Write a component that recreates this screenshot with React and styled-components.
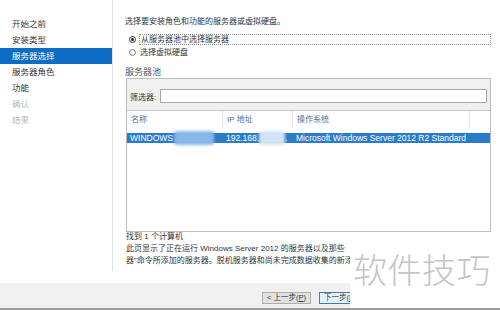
import React from "react";
import styled, { createGlobalStyle } from "styled-components";

const FONT = `"Liberation Sans", "Noto Sans CJK SC", sans-serif`;

const GlobalStyle = createGlobalStyle`
  html, body {
    margin: 0;
    padding: 0;
    background: #ffffff;
  }
  body {
    font-family: ${FONT};
    color: #1e1e1e;
  }
`;

const NAV_ITEMS = [
  { label: "开始之前" },
  { label: "安装类型" },
  { label: "服务器选择", active: true },
  { label: "服务器角色" },
  { label: "功能" },
  { label: "确认", disabled: true },
  { label: "结果", disabled: true },
];

const App = () => {
  return (
    <>
      <GlobalStyle />
      <Window>
        <Main>
          <Nav>
            {NAV_ITEMS.map((item) => (
              <NavItem
                key={item.label}
                $active={item.active}
                $disabled={item.disabled}
              >
                {item.label}
              </NavItem>
            ))}
          </Nav>
          <Content>
            <Intro>选择要安装角色和功能的服务器或虚拟硬盘。</Intro>
            <RadioGroup>
              <RadioRow>
                <Radio $checked />
                <RadioLabel $focused>从服务器池中选择服务器</RadioLabel>
              </RadioRow>
              <RadioRow>
                <Radio />
                <RadioLabel>选择虚拟硬盘</RadioLabel>
              </RadioRow>
            </RadioGroup>
            <PoolTitle>服务器池</PoolTitle>
            <PoolBox>
              <FilterBar>
                <FilterLabel>筛选器:</FilterLabel>
                <FilterInput />
              </FilterBar>
              <TableHead>
                <HeadCell>名称</HeadCell>
                <HeadCell>IP 地址</HeadCell>
                <HeadCell>操作系统</HeadCell>
                <HeadCell $last />
              </TableHead>
              <TableBody>
                <Row $selected>
                  <Cell>
                    WINDOWS
                    <Blur $left={47} $width={40} />
                  </Cell>
                  <Cell>
                    192.168.1
                    <Blur $left={36} $width={26} $light />
                    <Dot>.</Dot>
                  </Cell>
                  <Cell>Microsoft Windows Server 2012 R2 Standard</Cell>
                </Row>
              </TableBody>
            </PoolBox>
            <Found>找到 1 个计算机</Found>
            <Note>
              <NoteLine>此页显示了正在运行 Windows Server 2012 的服务器以及那些</NoteLine>
              <NoteLine>器”命令所添加的服务器。脱机服务器和尚未完成数据收集的新添</NoteLine>
            </Note>
          </Content>
        </Main>
        <Footer>
          <Button>
            &lt; 上一步(<u>P</u>)
          </Button>
          <Button $primary $cut>
            下一步(<u>N</u>
          </Button>
        </Footer>
        <Watermark>软件技巧</Watermark>
      </Window>
    </>
  );
};

const Window = styled.div`
  position: relative;
  width: 500px;
  height: 310px;
  overflow: hidden;
  display: flex;
  flex-direction: column;
  background: #ffffff;
`;

const Main = styled.div`
  display: flex;
  height: 283px;
`;

const Nav = styled.div`
  width: 112px;
  height: 255px;
  padding-top: 16px;
  border-right: 1px solid #e2e2e2;
  display: flex;
  flex-direction: column;
`;

const NavItem = styled.div`
  height: 16px;
  line-height: 16px;
  padding-left: 12px;
  font-size: 8.5px;
  white-space: nowrap;
  background: ${(p) => (p.$active ? "#0d6cc3" : "transparent")};
  color: ${(p) => (p.$active ? "#ffffff" : p.$disabled ? "#b9b9b9" : "#333333")};
`;

const Content = styled.div`
  flex: 1;
  min-width: 0;
  padding: 16px 9px 0 12px;
  display: flex;
  flex-direction: column;
`;

const Intro = styled.div`
  font-size: 8px;
  line-height: 11px;
  color: #333333;
`;

const RadioGroup = styled.div`
  margin-top: 8px;
  display: flex;
  flex-direction: column;
  gap: 4px;
`;

const RadioRow = styled.div`
  display: flex;
  align-items: center;
  height: 9px;
  padding-left: 4px;
  gap: 3px;
`;

const Radio = styled.span`
  box-sizing: border-box;
  width: 7px;
  height: 7px;
  border-radius: 50%;
  border: 1px solid ${(p) => (p.$checked ? "#333333" : "#7a7a7a")};
  display: flex;
  align-items: center;
  justify-content: center;
  flex-shrink: 0;

  &::after {
    content: "";
    width: 3px;
    height: 3px;
    border-radius: 50%;
    background: ${(p) => (p.$checked ? "#222222" : "transparent")};
  }
`;

const RadioLabel = styled.span`
  font-size: 8px;
  line-height: 9px;
  color: #333333;
  padding: 0 1px;
  ${(p) => (p.$focused ? "flex: 1; border: 1px dotted #8a8a8a;" : "")}
`;

const PoolTitle = styled.div`
  margin-top: 9px;
  font-size: 9px;
  line-height: 12px;
  color: #555555;
`;

const PoolBox = styled.div`
  margin-left: 1px;
  height: 154px;
  box-sizing: border-box;
  border: 1px solid #bcbcbc;
  display: flex;
  flex-direction: column;
`;

const FilterBar = styled.div`
  display: flex;
  align-items: center;
  gap: 4px;
  padding: 10px 3px 7px 3px;
  background: #f0f0f0;
  border-bottom: 1px solid #c8c8c8;
`;

const FilterLabel = styled.span`
  font-size: 8px;
  color: #333333;
  white-space: nowrap;
`;

const FilterInput = styled.div`
  flex: 1;
  height: 14px;
  box-sizing: border-box;
  background: #ffffff;
  border: 1px solid #a9a9a9;
`;

const TableHead = styled.div`
  display: grid;
  grid-template-columns: 96px 70px 177px 1fr;
  height: 17px;
`;

const HeadCell = styled.div`
  font-size: 8px;
  line-height: 17px;
  padding-left: 4px;
  color: #4d6f96;
  border-right: ${(p) => (p.$last ? "none" : "1px solid #e6e6e6")};
  white-space: nowrap;
`;

const TableBody = styled.div`
  flex: 1;
  padding-top: 5px;
`;

const Row = styled.div`
  display: grid;
  grid-template-columns: 96px 70px 1fr;
  height: 10px;
  background: ${(p) => (p.$selected ? "#2a7cca" : "transparent")};
  color: ${(p) => (p.$selected ? "#ffffff" : "#1e1e1e")};
`;

const Cell = styled.div`
  position: relative;
  font-size: 8.5px;
  line-height: 10px;
  padding-left: 3px;
  white-space: nowrap;
`;

const Blur = styled.span`
  position: absolute;
  top: -2px;
  left: ${(p) => p.$left}px;
  width: ${(p) => p.$width}px;
  height: 14px;
  border-radius: 3px;
  background: ${(p) => (p.$light ? "#d4e4f4" : "#86b8e8")};
  filter: blur(1.5px);
`;

const Dot = styled.span`
  position: absolute;
  left: 62px;
  top: 0;
`;

const Found = styled.div`
  margin-left: 1px;
  font-size: 8px;
  line-height: 10px;
  color: #333333;
`;

const Note = styled.div`
  margin-top: 1px;
  margin-left: 1px;
  display: flex;
  flex-direction: column;
`;

const NoteLine = styled.div`
  font-size: 8px;
  line-height: 12px;
  color: #333333;
  white-space: nowrap;
`;

const Footer = styled.div`
  flex: 1;
  background: #f0f0f0;
  border-bottom: 2px solid #9c9c9c;
  display: flex;
  align-items: flex-start;
  gap: 8px;
  padding: 9px 0 0 262px;
`;

const Button = styled.div`
  box-sizing: border-box;
  min-width: ${(p) => (p.$cut ? "40px" : "46px")};
  height: 12px;
  padding: 0 4px;
  font-size: 7.5px;
  line-height: 10px;
  text-align: ${(p) => (p.$cut ? "left" : "center")};
  white-space: nowrap;
  color: #333333;
  background: ${(p) => (p.$primary ? "#e5f1fb" : "#e1e1e1")};
  border: 1px solid ${(p) => (p.$primary ? "#3c7fb1" : "#adadad")};

  u {
    text-decoration: underline;
  }
`;

const Watermark = styled.div`
  position: absolute;
  left: 350px;
  top: 241px;
  right: 0;
  bottom: 2px;
  background: #ffffff;
  padding-left: 3px;
  padding-top: 8px;
  font-family: "Noto Sans CJK SC", sans-serif;
  font-weight: 300;
  font-size: 34px;
  line-height: 40px;
  letter-spacing: 0.5px;
  color: #c4c4c4;
  white-space: nowrap;
`;

export default App;
